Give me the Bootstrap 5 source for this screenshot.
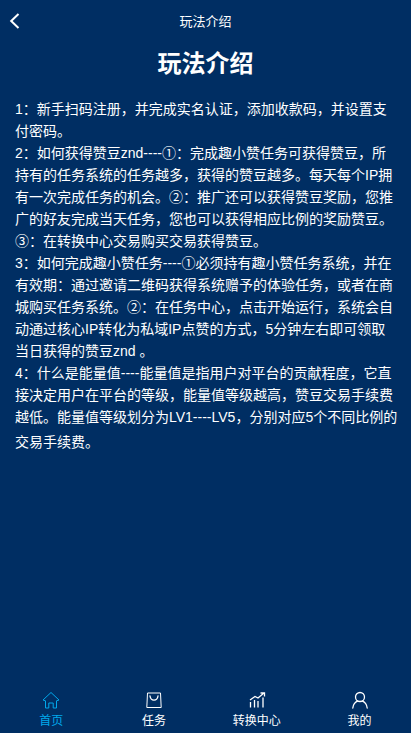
<!DOCTYPE html>
<html lang="zh">
<head>
<meta charset="utf-8">
<meta name="viewport" content="width=device-width, initial-scale=1">
<link href="https://cdn.jsdelivr.net/npm/bootstrap@5.3.0/dist/css/bootstrap.min.css" rel="stylesheet">
<style>
html,body{height:100%}
body{background:#002e63;color:#fff;font-family:"Liberation Sans","Noto Sans CJK SC",sans-serif;font-size:14px}
.screen{height:733px;width:411px;overflow:hidden}
.topbar{height:44px;position:relative;font-size:13px}
.backbtn{position:absolute;left:8px;top:12px;line-height:0}
.maintitle{font-size:24px;font-weight:700;line-height:36px;margin:0;padding-top:2px}
.rules{padding:16px 12px 0 15px;line-height:22px;font-size:14px;margin:0}
.lastline{line-height:28px;display:block}
.tabbar{height:42px}
.tabitem{flex:1 1 0;font-size:12px;line-height:16px;color:#fff;text-decoration:none}
.tabitem svg{display:block;margin-bottom:4px}
.tabitem.on{color:#00a8ec}
</style>
</head>
<body>
<div class="screen d-flex flex-column">
  <div class="topbar d-flex align-items-center justify-content-center">
    <a class="backbtn text-white" href="#" aria-label="返回">
      <svg width="14" height="18" viewBox="0 0 14 18" fill="none" stroke="currentColor" stroke-width="2"><path d="M10.500 2 3.200 9l7.300 7"/></svg>
    </a>
    <span>玩法介绍</span>
  </div>
  <h1 class="maintitle text-center">玩法介绍</h1>
  <div class="rules flex-grow-1">1：新手扫码注册，并完成实名认证，添加收款码，并设置支付密码。<br>2：如何获得赞豆znd----①：完成趣小赞任务可获得赞豆，所持有的任务系统的任务越多，获得的赞豆越多。每天每个IP拥有一次完成任务的机会。②：推广还可以获得赞豆奖励，您推广的好友完成当天任务，您也可以获得相应比例的奖励赞豆。③：在转换中心交易购买交易获得赞豆。<br>3：如何完成趣小赞任务----①必须持有趣小赞任务系统，并在有效期：通过邀请二维码获得系统赠予的体验任务，或者在商城购买任务系统。②：在任务中心，点击开始运行，系统会自动通过核心IP转化为私域IP点赞的方式，5分钟左右即可领取<br>当日获得的赞豆znd 。<br>4：什么是能量值----能量值是指用户对平台的贡献程度，它直接决定用户在平台的等级，能量值等级越高，赞豆交易手续费越低。能量值等级划分为LV1----LV5，分别对应5个不同比例的<span class="lastline">交易手续费。</span></div>
  <nav class="tabbar d-flex">
    <a class="tabitem on d-flex flex-column align-items-center" href="#">
      <svg width="18" height="18" viewBox="0 0 18 18" fill="none" stroke="currentColor" stroke-width="1"><path d="M1 9 9 1.500 17 9l-2.500.8V17h-3.300v-5H6.800v5H3.500V9.800z" stroke-linejoin="round"/></svg>
      <span>首页</span>
    </a>
    <a class="tabitem d-flex flex-column align-items-center" href="#">
      <svg width="18" height="18" viewBox="0 0 18 18" fill="none" stroke="currentColor" stroke-width="1"><path d="M2.500 2h13l.7 14.500H1.800z"/><path d="M5 5c.8 5.500 7.200 5.500 8 0" stroke-width="1.300" stroke-linecap="round"/></svg>
      <span>任务</span>
    </a>
    <a class="tabitem d-flex flex-column align-items-center" href="#">
      <svg width="18" height="18" viewBox="0 0 18 18" fill="none" stroke="currentColor" stroke-width="1.300"><path d="M2.500 16.500V11M6.500 16.500V9M10 16.500V10M15 16.500V6.500"/><path d="M2 9 7 5.500l3 1.500 6-5M12.500 2H16.500V5.500"/></svg>
      <span>转换中心</span>
    </a>
    <a class="tabitem d-flex flex-column align-items-center" href="#">
      <svg width="18" height="18" viewBox="0 0 18 18" fill="none" stroke="currentColor" stroke-width="1.300"><circle cx="9" cy="6" r="4.500"/><path d="M1.800 17c.5-3.500 2.700-6 4.700-6.800M16.200 17c-.5-3.500-2.700-6-4.700-6.800" stroke-linecap="round"/></svg>
      <span>我的</span>
    </a>
  </nav>
</div>
<script src="https://cdn.jsdelivr.net/npm/bootstrap@5.3.0/dist/js/bootstrap.bundle.min.js"></script>
</body>
</html>
